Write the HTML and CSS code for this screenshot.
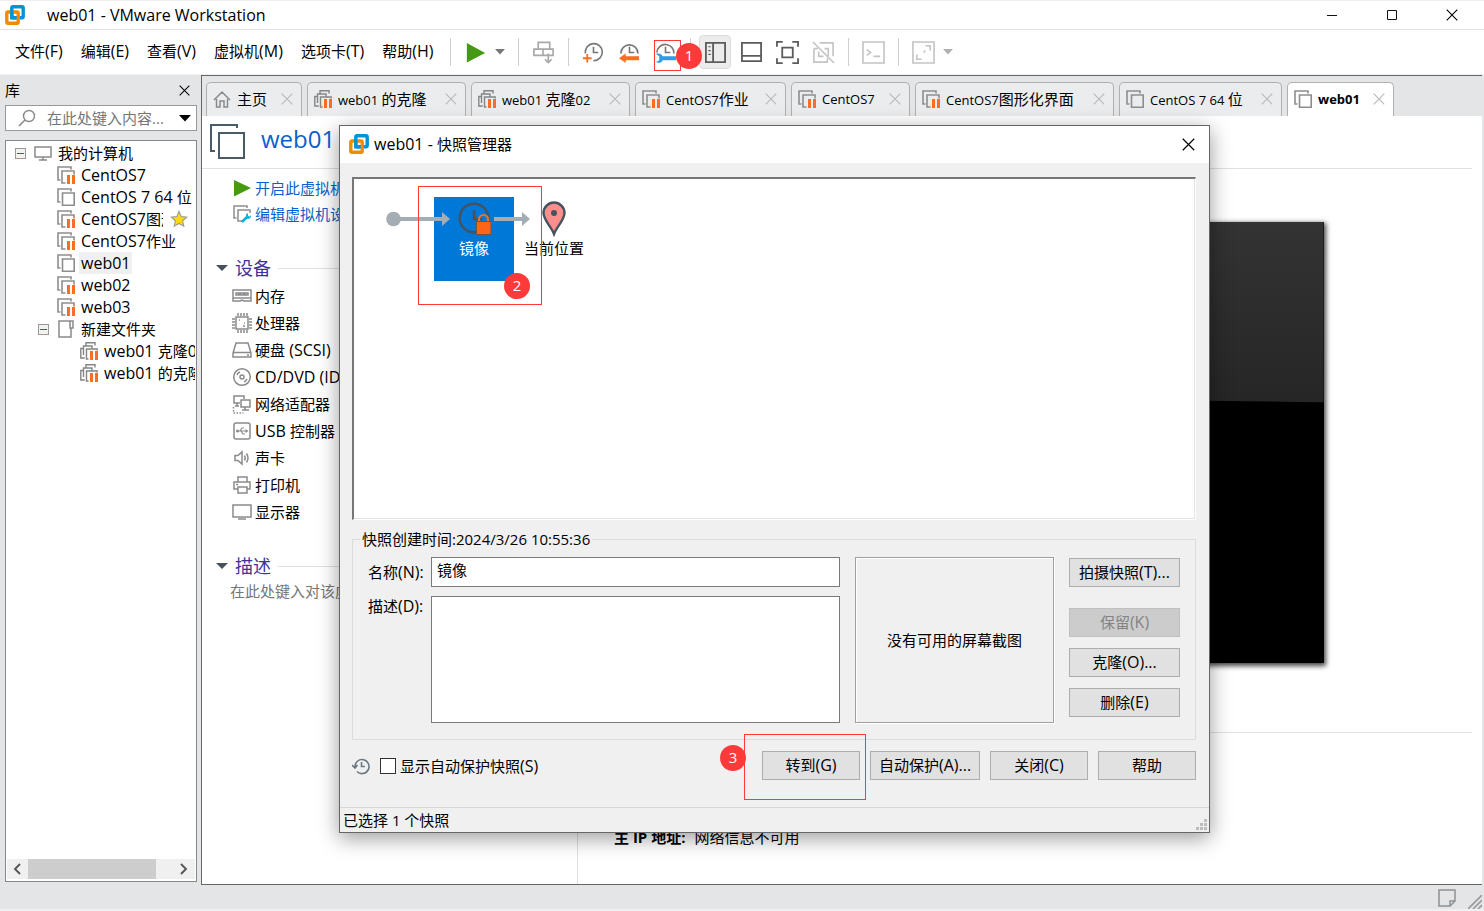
FILE: index.html
```html
<!DOCTYPE html>
<html lang="zh-CN">
<head>
<meta charset="utf-8">
<title>web01 - VMware Workstation</title>
<link rel="stylesheet" href="styles.css">
</head>
<body>
<svg class="defs" aria-hidden="true">
  <symbol id="logo" viewBox="0 0 20 20"><rect x="6.8" y="1.8" width="11.4" height="11" rx="1.2" fill="none" stroke="#0095d3" stroke-width="3.4"/><rect x="1.8" y="7" width="11.4" height="11.2" rx="1.2" fill="none" stroke="#f38b00" stroke-width="3.4"/><path d="M6.800 5v7.800h4.600" fill="none" stroke="#0095d3" stroke-width="3.4"/></symbol>
  <symbol id="vm" viewBox="0 0 18 18"><path d="M3.5 14H1V1h13v2.5M5.5 5h11.7v12.2H5.5z" fill="none" stroke="#8e8e8e" stroke-width="1.6"/></symbol>
  <symbol id="vmp" viewBox="0 0 18 18"><path d="M3.5 14H1V1h13v2.5M8.5 17H5V5h12v3.5" fill="none" stroke="#8e8e8e" stroke-width="1.6"/><path d="M10 9h3v9h-3zM15 9h3v9h-3z" fill="#f96e24"/></symbol>
  <symbol id="clone" viewBox="0 0 18 18"><path d="M6 4V.8h9v2.700M3.500 6.500H.8V16h4M3.500 13V4h8.500v2.500M8.500 17H6.500V7h10.700v1.500" fill="none" stroke="#858585" stroke-width="1.400"/><path d="M10 9h3v9h-3zM15 9h3v9h-3z" fill="#f96e24"/></symbol>
  <symbol id="x" viewBox="0 0 12 12"><path d="M.7.7l10.600 10.600M11.300.7L.7 11.300" fill="none" stroke="currentColor" stroke-width="1.100"/></symbol>
</svg>

<header class="titlebar">
  <svg class="i20"><use href="#logo"/></svg>
  <h1 class="en">web01 - VMware Workstation</h1>
  <div class="winctl">
    <button aria-label="最小化"><svg viewBox="0 0 12 12"><path d="M1 6.500h10" stroke="#111"/></svg></button>
    <button aria-label="最大化"><svg viewBox="0 0 12 12"><path d="M1.500 1.500h9v9h-9z" fill="none" stroke="#111"/></svg></button>
    <button aria-label="关闭"><svg><use href="#x"/></svg></button>
  </div>
</header>

<div class="toolbar">
  <nav class="menu">
    <button>文件<span class="en">(F)</span></button><button>编辑<span class="en">(E)</span></button><button>查看<span class="en">(V)</span></button><button>虚拟机<span class="en">(M)</span></button><button>选项卡<span class="en">(T)</span></button><button>帮助<span class="en">(H)</span></button>
  </nav>
  <i class="sep"></i>
  <button class="tool" aria-label="开启"><svg viewBox="0 0 24 24"><path d="M3 2l19 10.500L3 22.500z" fill="#459a12"/></svg></button>
  <button class="caret wide" aria-label="电源选项"><svg viewBox="0 0 10 6"><path d="M0 0h10L5 5.500z" fill="#777"/></svg></button>
  <i class="sep"></i>
  <button class="tool" aria-label="发送按键"><svg viewBox="0 0 24 24" fill="none" stroke="#a8a8a8" stroke-width="1.700"><path d="M6.500 8V1.500h12V8M2 8.500h9.500V15H2zM11.500 8.500H22V15H11.500M17 13v9M13.500 19l3.500 3.500 3.500-3.500"/></svg></button>
  <i class="sep"></i>
  <button class="tool" aria-label="拍摄快照"><svg viewBox="0 0 24 24"><path d="M3.500 13a8.900 8.900 0 1 1 8.500 7.500" fill="none" stroke="#777" stroke-width="1.700"/><path d="M12 6v6h5" fill="none" stroke="#777" stroke-width="1.700"/><path d="M1 18h9M5.500 13.500v9" stroke="#f96e24" stroke-width="1.900"/></svg></button>
  <button class="tool" aria-label="恢复快照"><svg viewBox="0 0 24 24"><path d="M3 13a8.900 8.900 0 1 1 17.800 0M12 6v6h5" fill="none" stroke="#777" stroke-width="1.700"/><path d="M1 18l7-5v3h14v4H8v3z" fill="#f96e24"/></svg></button>
  <button class="tool" aria-label="管理快照"><svg viewBox="0 0 24 24"><path d="M3 12a8.900 8.900 0 1 1 17.800 1M12 6v6h5" fill="none" stroke="#777" stroke-width="1.700"/><path d="M2 13.500c2-1 6-.5 7 2.500h14v4H9c-1 3-5 3.500-7 2l3.500-2v-4z" fill="#2f9be0"/></svg><span class="mark mark1"></span><b class="num num1">1</b></button>
  <i class="sep"></i>
  <button class="tool on" aria-label="显示库"><svg viewBox="0 0 24 24" fill="none" stroke="#5c5c5c" stroke-width="1.900"><path d="M2 2h20v20H2zM9.500 2v20"/><path d="M4.500 6h2.500M4.500 10h2.500M4.500 14h2.500" stroke-width="1.200"/></svg></button>
  <button class="tool" aria-label="显示缩略图"><svg viewBox="0 0 24 24" fill="none" stroke="#5c5c5c" stroke-width="1.900"><path d="M2 2h20v19H2zM2 15.500h20"/></svg></button>
  <button class="tool" aria-label="全屏"><svg viewBox="0 0 24 24" fill="none" stroke="#5c5c5c" stroke-width="1.900"><path d="M6.500 7h11v10h-11zM1 6V1h6M17 1h6v5M23 18v5h-6M7 23H1v-5"/></svg></button>
  <button class="tool" aria-label="Unity"><svg viewBox="0 0 24 24" fill="none" stroke="#c4c4c4" stroke-width="1.700"><path d="M8 2h14v14M2 8v14h14v-4M2 8h4M13 8h4v8M7 11v5h5M1 1l22 22"/></svg></button>
  <i class="sep"></i>
  <button class="tool" aria-label="控制台"><svg viewBox="0 0 24 24" fill="none" stroke="#c4c4c4" stroke-width="1.700"><path d="M1 1h22v22H1zM5 9l4 3-4 3M12 16h7"/></svg></button>
  <i class="sep"></i>
  <button class="tool" aria-label="自由拉伸"><svg viewBox="0 0 24 24" fill="none" stroke="#c4c4c4" stroke-width="1.700"><path d="M1 1h22v22H1zM14 5h5v5M5 14v5h5M12 12l2-2"/></svg></button>
  <button class="caret" aria-label="拉伸选项"><svg viewBox="0 0 10 6"><path d="M0 0h10L5 5.500z" fill="#b0b0b0"/></svg></button>
</div>

<div class="work">
  <aside class="side">
    <div class="sidehead"><h2>库</h2><button aria-label="关闭库"><svg><use href="#x"/></svg></button></div>
    <div class="search">
      <svg viewBox="0 0 18 18"><circle cx="11" cy="7" r="5.500" fill="none" stroke="#888" stroke-width="1.400"/><path d="M7 11l-6 6" stroke="#888" stroke-width="1.600"/></svg>
      <input type="text" placeholder="在此处键入内容..." aria-label="搜索">
      <button aria-label="搜索选项"><svg viewBox="0 0 12 7"><path d="M0 0h12L6 6.500z"/></svg></button>
    </div>
    <div class="tree">
      <ul>
        <li class="l0"><button class="tog" aria-label="折叠"></button><svg viewBox="0 0 18 18" fill="none" stroke="#8a8a8a" stroke-width="1.500"><path d="M1 3h16v10H1zM9 13v3M5 16h8"/></svg><span>我的计算机</span></li>
        <li class="l1"><svg><use href="#vmp"/></svg><span class="en">CentOS7</span></li>
        <li class="l1"><svg><use href="#vm"/></svg><span><span class="en">CentOS 7 64 </span>位</span></li>
        <li class="l1"><svg><use href="#vmp"/></svg><span class="cut"><span class="en">CentOS7</span>图形化界面</span><svg class="star" viewBox="0 0 18 18"><path d="M9 1.500l2.200 5.100 5.600.5-4.200 3.700 1.200 5.400L9 13.400l-4.800 2.800 1.200-5.400L1.200 7.100l5.600-.5z" fill="#ffd814" stroke="#999" stroke-width="1.100"/></svg></li>
        <li class="l1"><svg><use href="#vmp"/></svg><span><span class="en">CentOS7</span>作业</span></li>
        <li class="l1"><svg><use href="#vm"/></svg><span class="en sel">web01</span></li>
        <li class="l1"><svg><use href="#vmp"/></svg><span class="en">web02</span></li>
        <li class="l1"><svg><use href="#vmp"/></svg><span class="en">web03</span></li>
        <li class="lf"><button class="tog" aria-label="折叠"></button><svg viewBox="0 0 18 18" fill="none" stroke="#8a8a8a" stroke-width="1.500"><path d="M13 1H2v16h12V8M13 1h3v7h-3z"/></svg><span>新建文件夹</span></li>
        <li class="l2"><svg><use href="#clone"/></svg><span><span class="en">web01 </span>克隆<span class="en">02</span></span></li>
        <li class="l2"><svg><use href="#clone"/></svg><span><span class="en">web01 </span>的克隆</span></li>
      </ul>
      <div class="hscroll"><svg viewBox="0 0 8 12"><path d="M7 1L2 6l5 5" fill="none" stroke="#555" stroke-width="1.900"/></svg><i></i><svg viewBox="0 0 8 12"><path d="M1 1l5 5-5 5" fill="none" stroke="#555" stroke-width="1.900"/></svg></div>
    </div>
  </aside>

  <main class="main">
    <div class="tabs">
      <div class="tab w96"><svg viewBox="0 0 18 18" fill="none" stroke="#8a8a8a" stroke-width="1.500"><path d="M1 10l8-8 8 8M3.500 9v8H7v-6h4v6h3.500V9"/></svg><span>主页</span><button aria-label="关闭标签"><svg><use href="#x"/></svg></button></div>
      <div class="tab w159"><svg><use href="#clone"/></svg><span><span class="sm">web01 </span>的克隆</span><button aria-label="关闭标签"><svg><use href="#x"/></svg></button></div>
      <div class="tab w159"><svg><use href="#clone"/></svg><span><span class="sm">web01 </span>克隆<span class="sm">02</span></span><button aria-label="关闭标签"><svg><use href="#x"/></svg></button></div>
      <div class="tab w151"><svg><use href="#vmp"/></svg><span><span class="sm">CentOS7</span>作业</span><button aria-label="关闭标签"><svg><use href="#x"/></svg></button></div>
      <div class="tab w119"><svg><use href="#vmp"/></svg><span class="sm">CentOS7</span><button aria-label="关闭标签"><svg><use href="#x"/></svg></button></div>
      <div class="tab w199"><svg><use href="#vmp"/></svg><span><span class="sm">CentOS7</span>图形化界面</span><button aria-label="关闭标签"><svg><use href="#x"/></svg></button></div>
      <div class="tab w163"><svg><use href="#vm"/></svg><span><span class="sm">CentOS 7 64 </span>位</span><button aria-label="关闭标签"><svg><use href="#x"/></svg></button></div>
      <div class="tab w107 active"><svg><use href="#vm"/></svg><span class="sm">web01</span><button aria-label="关闭标签"><svg><use href="#x"/></svg></button></div>
    </div>
    <div class="vmhead"><svg viewBox="0 0 36 36" fill="none" stroke="#4a5b68" stroke-width="2"><path d="M5 27H1V1h26v3M9 9h25v25H9z"/></svg><h2>web01</h2></div>
    <div class="vmbody">
      <section class="left">
        <a class="act" href="#"><svg viewBox="0 0 18 18"><path d="M1 1l17 8L1 17.500z" fill="#459a12"/></svg>开启此虚拟机</a>
        <a class="act" href="#"><svg viewBox="0 0 18 18"><path d="M3.500 13H1V1h13v2M9 16H5V5h12v3" fill="none" stroke="#8e8e8e" stroke-width="1.500"/><path d="M9 17l5-5" stroke="#00b4d8" stroke-width="2.500"/><path d="M13 9.500l2-1.500v3l2 .5 1-1.500c.5 3-2 4.500-4.500 3.500z" fill="#00b4d8"/></svg>编辑虚拟机设置</a>
        <h3><i></i>设备</h3>
        <ul class="devs">
          <li><svg viewBox="0 0 20 20"><path d="M1 4h18v11h-7l-2-1-2 1H1zM1 12h18" /><path d="M4 7h3v2H4zM8.500 7h3v2h-3zM13 7h3v2h-3z"/></svg>内存</li>
          <li><svg viewBox="0 0 20 20"><path d="M4 4h12v12H4z"/><path d="M6 0v3M9 0v3M12 0v3M15 0v3M6 17v3M9 17v3M12 17v3M15 17v3M0 6h3M0 9h3M0 12h3M0 15h3M17 6h3M17 9h3M17 12h3M17 15h3M7 7h1M11 13h2M12 10h1"/></svg>处理器</li>
          <li><svg viewBox="0 0 20 20"><path d="M4 3h12l3 10v4H1v-4zM1 12.500h18M15 15h2"/></svg>硬盘<span class="en">&nbsp;(SCSI)</span></li>
          <li><svg viewBox="0 0 20 20"><circle cx="10" cy="10" r="8.300"/><circle cx="10" cy="10" r="2"/><path d="M5 8a5 5 0 0 1 3-3M15 12a5 5 0 0 1-3 3"/></svg><span class="en">CD/DVD (IDE)</span></li>
          <li><svg viewBox="0 0 20 20"><path d="M8 9H2V2h10v3M5 9v3M3 12h4M9 6h9v7H9zM13 13v3M10 16h7"/><path d="M1.500 13v6h10" stroke-dasharray="1.500 1.500"/></svg>网络适配器</li>
          <li><svg viewBox="0 0 20 20"><rect x="2" y="2" width="16" height="16" rx="2"/><path d="M5 10h10M8 10l2-3h2M9 10l2 3h2" stroke-width="1.200"/><path d="M13.500 8l3 2-3 2z" fill="#8a8a8a" stroke="none"/><circle cx="5.500" cy="10" r="1.500" fill="#8a8a8a" stroke="none"/></svg><span class="en">USB&nbsp;</span>控制器</li>
          <li><svg viewBox="0 0 20 20"><path d="M3 7.500h3l4-3.500v12l-4-3.500H3zM12.500 7.500q1.500 2.500 0 5M14.500 5.500q3 4.500 0 9"/></svg>声卡</li>
          <li><svg viewBox="0 0 20 20"><path d="M6 7V2h9v5M6 14H2V7h16v7h-3M6 12h9v6H6zM4 9.500h2"/></svg>打印机</li>
          <li><svg viewBox="0 0 20 20"><path d="M1 3h18v12H1zM6 17h8"/></svg>显示器</li>
        </ul>
        <h3><i></i>描述</h3>
        <p class="hint">在此处键入对该虚拟机的描述。</p>
      </section>
      <section class="right">
        <div class="screen"><svg viewBox="0 0 587 440" preserveAspectRatio="none"><defs><linearGradient id="gl" x1="0" y1="0" x2="0" y2="1"><stop offset="0" stop-color="#333"/><stop offset="1" stop-color="#262626"/></linearGradient></defs><path d="M0 0h587v180Q293 175 0 180z" fill="url(#gl)"/></svg></div>
        <div class="details"><p><b>主 IP 地址:</b><span>网络信息不可用</span></p></div>
      </section>
    </div>
  </main>
</div>

<footer class="status">
  <svg class="note" viewBox="0 0 18 18" fill="none" stroke="#8d9194" stroke-width="1.500"><path d="M1 1h16v11l-5 5H1zM12 17v-5h5"/></svg>
  <svg class="grip" viewBox="0 0 14 14" stroke="#999" stroke-width="1.600"><path d="M0 14L14 0M5 14l9-9M10 14l4-4"/></svg>
</footer>

<div class="dialog" role="dialog" aria-labelledby="dt">
  <div class="dtitle"><svg class="i20"><use href="#logo"/></svg><h2 id="dt"><span class="en">web01 - </span>快照管理器</h2><button aria-label="关闭"><svg><use href="#x"/></svg></button></div>
  <div class="dbody">
    <div class="canvas">
      <div class="node"><svg viewBox="0 0 36 36"><circle cx="16" cy="17" r="14.300" fill="none" stroke="#46535e" stroke-width="2.400"/><path d="M16 9v9h8" fill="none" stroke="#46535e" stroke-width="2.600"/><path d="M21 21v-2.500a4.500 4.500 0 0 1 9 0V21" fill="none" stroke="#f96e24" stroke-width="2.200"/><path d="M18.500 20.500h14.500v13H18.500z" fill="#ff6518" stroke="#7c5136"/></svg><span>镜像</span></div>
      <svg class="link" viewBox="0 0 146 16" fill="#a5adb4"><circle cx="7.500" cy="8" r="7.300"/><path d="M10 6h46V1l8 7-8 7v-5H10zM108 6h28V1l8 7-8 7v-5h-28z"/></svg>
      <div class="here"><svg viewBox="0 0 24 36"><path d="M12 33C9 25 1.500 19 1.500 12a10.500 10.500 0 0 1 21 0C22.500 19 15 25 12 33z" fill="#fc8f8c" stroke="#46535e" stroke-width="2.400"/><circle cx="12" cy="12" r="3" fill="#46535e"/></svg><span>当前位置</span></div>
      <span class="mark mark2"></span><b class="num num2">2</b>
    </div>
    <fieldset>
      <legend>快照创建时间:2024/3/26 10:55:36</legend>
      <div class="form">
        <div class="fields">
          <label for="n">名称<span class="en">(N):</span></label><input id="n" type="text" value="镜像">
          <label for="d">描述<span class="en">(D):</span></label><textarea id="d"></textarea>
        </div>
        <div class="shot">没有可用的屏幕截图</div>
        <div class="acts">
          <button class="btn first">拍摄快照<span class="en">(T)...</span></button>
          <button class="btn" disabled>保留<span class="en">(K)</span></button>
          <button class="btn">克隆<span class="en">(O)...</span></button>
          <button class="btn">删除<span class="en">(E)</span></button>
        </div>
      </div>
    </fieldset>
    <div class="drow">
      <svg class="hist" viewBox="0 0 18 18" fill="none" stroke="#6b7984" stroke-width="1.600"><path d="M3 10a7 7 0 1 1 2 4.500M9.500 5v4.500H13M0 8l3 3 2.500-3"/></svg>
      <label class="check"><input type="checkbox">显示自动保护快照<span class="en">(S)</span></label>
      <div class="go"><button class="btn">转到<span class="en">(G)</span></button><span class="mark mark3"></span><b class="num num3">3</b></div>
      <button class="btn big">自动保护<span class="en">(A)...</span></button>
      <button class="btn">关闭<span class="en">(C)</span></button>
      <button class="btn">帮助</button>
    </div>
  </div>
  <div class="dstatus"><span>已选择 1 个快照</span><svg viewBox="0 0 11 11" fill="#bdbdbd"><path d="M8 0h3v3H8zM8 4h3v3H8zM8 8h3v3H8zM4 4h3v3H4zM4 8h3v3H4zM0 8h3v3H0z"/></svg></div>
</div>
</body>
</html>
```

FILE: styles.css
```css
* { box-sizing: border-box; }
body {
  margin: 0;
  min-height: 100vh;
  display: grid;
  grid-template-rows: 30px 45px 1fr 26px;
  position: relative;
  background: #e4e5e7;
  color: #000;
  font: 15px/20px "Open Sans", "Noto Sans CJK SC", sans-serif;
}
h1, h2, h3, p, ul { margin: 0; padding: 0; font-weight: 400; font-size: 15px; }
ul { list-style: none; }
button, input, textarea { font: inherit; color: inherit; }
button { padding: 0; border: 0; background: none; white-space: nowrap; }
svg { flex: none; display: block; }
.defs { position: absolute; width: 0; height: 0; }
.en { font-size: 16px; }
.sm { font-size: 13px; }
.i20 { width: 20px; height: 20px; }

.titlebar {
  display: flex;
  align-items: center;
  gap: 22px;
  padding-left: 5px;
  background: #fff;
  border-top: 1px solid #eee;
  border-bottom: 1px solid #e2e2e2;
}
.titlebar .en { font-size: 16px; }
.winctl { display: flex; margin-left: auto; padding-right: 2px; }
.winctl button { width: 60px; height: 28px; display: grid; place-items: center; }
.winctl svg { width: 12px; height: 12px; }

.toolbar { display: flex; align-items: center; background: #fff; border-bottom: 1px solid #f0f0f0; }
.menu { display: flex; flex: 0 0 443px; gap: 18px; padding: 0 0 2px 15px; }
.sep { flex: 0 0 14px; height: 28px; background: linear-gradient(#cfcfcf, #cfcfcf) center / 1px 100% no-repeat; }
.tool { position: relative; flex: 0 0 36px; height: 36px; display: grid; place-items: center; }
.tool svg { width: 23px; height: 23px; }
.tool.on::before { content: ""; position: absolute; inset: 1px 2px; border: 1px solid #dcdcdc; border-radius: 4px; background: #ececec; }
.tool.on svg { position: relative; }
.caret { flex: 0 0 14px; display: grid; place-items: center; }
.caret.wide { flex-basis: 18px; justify-content: start; padding-left: 2px; }
.caret svg { width: 10px; height: 6px; }

.mark { position: absolute; border: 1px solid #fc3a3a; pointer-events: none; }
.num {
  position: absolute;
  z-index: 2;
  width: 26px;
  height: 26px;
  border-radius: 50%;
  background: #fc3a3a;
  color: #fff;
  font: 15px/24px "Open Sans", sans-serif;
  text-align: center;
}
.mark1 { left: 7px; top: 6px; width: 27px; height: 31px; }
.num1 { left: 29px; top: 9px; }
.mark2 { left: 64px; top: 7px; width: 124px; height: 119px; }
.num2 { left: 150px; top: 94px; }
.mark3 { left: -18px; top: -17px; width: 122px; height: 66px; }
.num3 { left: -42px; top: -6px; }

.work { display: grid; grid-template-columns: 201px 1fr; min-height: 0; padding-right: 2px; }
.side { display: flex; flex-direction: column; min-width: 0; padding: 0 4px 3px 5px; }
.sidehead { display: flex; justify-content: space-between; align-items: center; height: 30px; }
.sidehead svg { width: 11px; height: 11px; }
.sidehead button { padding-right: 7px; }
.search { display: flex; align-items: center; height: 26px; padding: 0 5px 0 12px; background: #fff; border: 1px solid #999; }
.search svg { width: 18px; height: 18px; }
.search button svg { width: 12px; height: 7px; }
.search input { flex: 1; min-width: 0; margin-left: 11px; padding: 0; border: 0; outline: 0; }
.search input::placeholder { color: #767676; opacity: 1; }
.tree { flex: 1; display: flex; flex-direction: column; justify-content: space-between; margin-top: 9px; padding: 1px 1px 2px; background: #fff; border: 1px solid #828790; }
.tree ul { overflow: hidden; }
.tree li { display: flex; align-items: center; height: 22px; white-space: nowrap; }
.tree li > svg { width: 18px; height: 18px; margin-right: 6px; }
.l0 { padding-left: 8px; }
.l0 .tog { margin-right: 8px; }
.l1 { padding-left: 50px; }
.lf { padding-left: 31px; }
.lf .tog { margin-right: 8px; }
.l2 { padding-left: 73px; }
.tog { flex: none; width: 11px; height: 11px; border: 1px solid #999; background: linear-gradient(#3a57a0, #3a57a0) center / 7px 1px no-repeat #f2f2f2; }
.cut { flex: 0 0 82px; overflow: hidden; }
.tree li > .star { margin-left: 7px; }
.sel { background: #f0f0f0; padding: 1px 2px; margin-left: -2px; }
.hscroll { display: flex; align-items: center; justify-content: space-between; height: 20px; padding: 0 7px 0 6px; background: #f0f0f0; }
.hscroll svg { width: 8px; height: 12px; }
.hscroll i { flex: 0 1 128px; height: 20px; margin-right: 12px; margin-left: -6px; background: #cdcdcd; }

.main { display: flex; flex-direction: column; min-width: 0; background: #fff; border: 1px solid #666; border-width: 1px 0 1px 1px; }
.tabs { display: flex; gap: 5px; padding: 6px 4px 0; background: #e4e5e7; height: 40px; }
.tab { display: flex; align-items: center; gap: 6px; padding: 0 8px 1px 6px; background: #ebecee; border: 1px solid #b0b0b0; border-bottom: 0; border-radius: 5px 5px 0 0; white-space: nowrap; }
.tab > svg { width: 18px; height: 18px; }
.tab button { margin-left: auto; color: #b8b8b8; }
.tab button svg { width: 12px; height: 12px; }
.tab.active { background: #fff; font-weight: 700; }
.w96 { flex: 0 1 96px; } .w107 { flex: 0 1 107px; } .w119 { flex: 0 1 119px; } .w151 { flex: 0 1 151px; }
.w159 { flex: 0 1 159px; } .w163 { flex: 0 1 163px; } .w199 { flex: 0 1 199px; }
.vmhead { display: flex; gap: 15px; height: 53px; padding: 8px 8px 0; margin-right: 10px; border-bottom: 1px solid #e0e0e0; }
.vmhead svg { width: 36px; height: 36px; }
.vmhead h2 { color: #0b5fcc; font-size: 24px; line-height: 30px; }
.vmbody { flex: 1; display: grid; grid-template-columns: 376px 1fr; }
.left { padding: 6px 0 0 14px; border-right: 1px solid #e0e0e0; }
.act { display: flex; align-items: center; gap: 4px; height: 26px; padding-left: 17px; color: #0b5fcc; text-decoration: none; }
.act svg { width: 18px; height: 18px; }
.left h3 { display: flex; align-items: center; gap: 7px; margin: 28px 10px 0 0; height: 26px; color: #43309c; font-size: 18px; }
.left h3 i { border: 6px solid transparent; border-top-color: #46535e; border-bottom-width: 0; }
.left h3::after { content: ""; flex: 1; height: 1px; background: #e0e0e0; }
.devs { padding: 1px 0 0 16px; }
.devs li { display: flex; align-items: center; height: 27px; }
.devs svg { width: 20px; height: 20px; margin-right: 3px; fill: none; stroke: #8a8a8a; stroke-width: 1.5; }
.hint { padding: 2px 0 0 14px; color: #767676; }
.right { min-width: 0; padding-top: 53px; }
.screen { width: 65%; aspect-ratio: 4 / 3; margin: 0 auto; background: #000; box-shadow: 1px 2px 5px 1px #444; }
.screen svg { width: 100%; height: 100%; }
.details { margin: 69px 10px 0 0; padding: 94px 0 0 36px; border-top: 1px solid #e0e0e0; }
.details p { display: flex; gap: 9px; }

.status { display: flex; justify-content: flex-end; gap: 12px; padding: 4px 2px 0 0; border-bottom: 2px solid #f0f0f0; }
.note { width: 18px; height: 18px; }
.grip { width: 14px; height: 14px; align-self: flex-end; }

.dialog { position: absolute; left: 339px; top: 125px; width: 871px; background: #f0f0f0; border: 1px solid #666; box-shadow: 0 5px 20px rgba(0, 0, 0, .4); }
.dtitle { display: flex; align-items: center; gap: 5px; height: 37px; padding: 0 14px 1px 9px; background: #fff; }
.dtitle button { margin-left: auto; }
.dtitle button svg { width: 13px; height: 13px; }
.dbody { padding: 14px 13px 27px 12px; }
.canvas { position: relative; height: 343px; background: #fff; border: 1px solid #fff; border-top: 2px solid #777; border-left: 2px solid #777; box-shadow: inset -1px -1px #e3e3e3; }
.node { position: absolute; left: 80px; top: 18px; width: 80px; height: 84px; padding-top: 4px; background: #0078d7; color: #fff; text-align: center; }
.node svg { width: 36px; height: 36px; margin: 0 auto 1px 24px; }
.link { position: absolute; left: 32px; top: 32px; width: 146px; height: 16px; }
.here { position: absolute; left: 170px; top: 22px; width: 60px; text-align: center; }
.here svg { width: 24px; height: 36px; margin: 0 auto 1px; }
.here span { white-space: nowrap; }
fieldset { margin: 9px 0 0; padding: 8px 15px 16px; border: 1px solid #dcdcdc; min-width: 0; }
legend { margin-left: -8px; padding: 0 2px; height: 20px; }
.form { display: flex; gap: 15px; }
.fields { flex: 1; display: grid; grid-template-columns: 63px 1fr; grid-template-rows: 30px 127px; row-gap: 9px; }
.fields label[for="n"] { padding-top: 5px; }
.fields input, .fields textarea { width: 100%; height: 100%; padding: 0 5px; border: 1px solid #7a7a7a; border-radius: 0; background: #fff; resize: none; }
.fields input { padding-bottom: 6px; }
.shot { flex: 0 0 199px; display: grid; place-items: center; border: 1px solid #a0a0a0; box-shadow: inset 1px 1px #fff, 1px 1px #fff; }
.acts { flex: 0 0 111px; display: flex; flex-direction: column; gap: 11px; padding-top: 1px; }
.btn { height: 29px; min-width: 98px; padding-bottom: 2px; border: 1px solid #adadad; background: #e1e1e1; }
.btn.first { margin-bottom: 10px; }
.btn.big { min-width: 110px; }
.btn:disabled { background: #ccc; border-color: #bfbfbf; color: #838383; }
.drow { display: flex; align-items: center; gap: 10px; margin-top: 11px; }
.hist { width: 18px; height: 18px; }
.check { display: flex; align-items: center; margin-right: auto; }
.check input { appearance: none; width: 16px; height: 16px; margin: 0 4px 0 0; border: 1px solid #333; background: #fff; }
.go { position: relative; }
.dstatus { display: flex; align-items: center; justify-content: space-between; height: 25px; padding: 0 2px 0 3px; border-top: 1px solid #d7d7d7; }
.dstatus svg { width: 11px; height: 11px; align-self: flex-end; margin-bottom: 2px; }
```
